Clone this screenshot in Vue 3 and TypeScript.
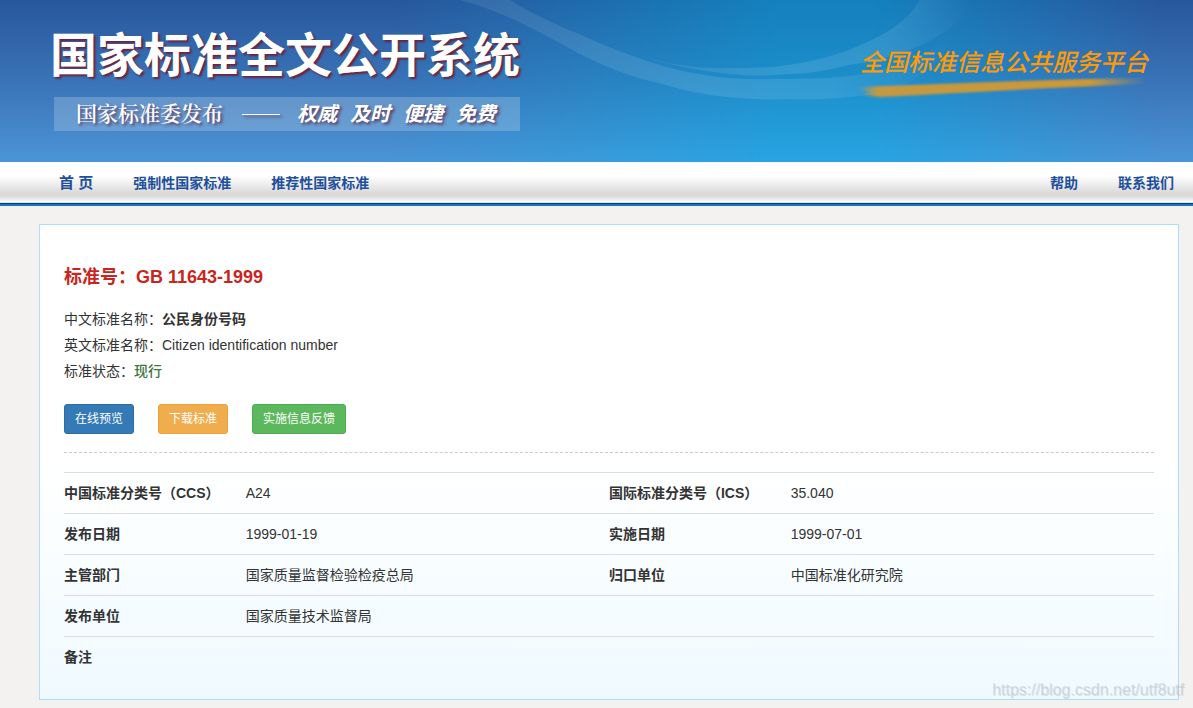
<script setup lang="ts">
interface Row {
  label: string
  value: string
  label2?: string
  value2?: string
}

const slogans: string[] = ['权威', '及时', '便捷', '免费']
const mainLinks: string[] = ['首 页', '强制性国家标准', '推荐性国家标准']
const sideLinks: string[] = ['帮助', '联系我们']
const rows: Row[] = [
  { label: '中国标准分类号（CCS）', value: 'A24', label2: '国际标准分类号（ICS）', value2: '35.040' },
  { label: '发布日期', value: '1999-01-19', label2: '实施日期', value2: '1999-07-01' },
  { label: '主管部门', value: '国家质量监督检验检疫总局', label2: '归口单位', value2: '中国标准化研究院' },
  { label: '发布单位', value: '国家质量技术监督局' },
  { label: '备注', value: '' },
]
</script>

<template>
  <div class="page">
    <header class="banner">
      <svg class="waves" viewBox="0 0 1193 162" preserveAspectRatio="none" aria-hidden="true">
        <defs>
          <linearGradient id="base" x1="0" y1="0" x2="0" y2="1">
            <stop offset="0" stop-color="#28579c" />
            <stop offset="0.5" stop-color="#3a73b7" />
            <stop offset="1" stop-color="#4b95d6" />
          </linearGradient>
          <linearGradient id="cyan" x1="0" y1="0" x2="0" y2="1">
            <stop offset="0" stop-color="#1580bd" />
            <stop offset="0.5" stop-color="#1b8fcb" />
            <stop offset="1" stop-color="#29a4e2" />
          </linearGradient>
          <linearGradient id="fade" x1="0" y1="0" x2="1" y2="0">
            <stop offset="0" stop-color="#000" />
            <stop offset="0.15" stop-color="#484848" />
            <stop offset="0.32" stop-color="#a8a8a8" />
            <stop offset="0.48" stop-color="#fff" />
            <stop offset="0.6" stop-color="#fff" />
            <stop offset="0.76" stop-color="#909090" />
            <stop offset="0.96" stop-color="#000" />
          </linearGradient>
          <linearGradient id="ribbon" x1="0" y1="0" x2="1" y2="0">
            <stop offset="0" stop-color="#fff" stop-opacity="0.08" />
            <stop offset="0.5" stop-color="#fff" stop-opacity="0.11" />
            <stop offset="0.75" stop-color="#fff" stop-opacity="0.1" />
            <stop offset="1" stop-color="#fff" stop-opacity="0" />
          </linearGradient>
          <mask id="glow">
            <rect x="392" width="801" height="162" fill="url(#fade)" />
          </mask>
        </defs>
        <rect width="1193" height="162" fill="url(#base)" />
        <rect width="1193" height="162" fill="url(#cyan)" mask="url(#glow)" />
        <path d="M460 0H510C521 7 532 13 543 18C557 25 570 31 584 36C600 44 616 50 633 56C657 65 681 72 706 75C728 79 750 80 772 79C798 79 824 79 849 76C871 73 891 67 910 60C925 54 940 46 953 37C942 58 925 77 900 87C884 93 867 96 849 97C829 99 808 100 788 99C767 100 747 99 727 97C706 95 686 91 666 85C646 80 627 75 608 67C591 60 575 52 560 43C545 35 530 27 515 20C497 12 479 5 460 0Z" fill="url(#ribbon)" />
        <path d="M640 56C670 65 700 69 731 68C751 68 770 68 788 65C810 62 830 57 849 50C864 44 878 37 890 30C902 22 914 11 920 0H972C968 11 961 20 951 27C939 37 925 44 910 50C890 57 870 62 849 65C829 70 808 74 788 74C769 76 750 76 731 74C700 71 669 65 640 56Z" fill="url(#ribbon)" />
      </svg>
      <div class="brand">
        <h1>国家标准全文公开系统</h1>
        <p class="tagline">
          <span class="issuer">国家标准委发布</span>
          <span class="dash"></span>
          <span class="slogans"><em v-for="s in slogans" :key="s">{{ s }}</em></span>
        </p>
      </div>
      <div class="platform">
        <span>全国标准信息公共服务平台</span>
        <svg class="stroke" viewBox="0 0 288 22" aria-hidden="true">
          <defs>
            <linearGradient id="brush" x1="0" y1="0" x2="1" y2="0">
              <stop offset="0" stop-color="#d79a30" stop-opacity="0.1" />
              <stop offset="0.06" stop-color="#d79a30" stop-opacity="0.9" />
              <stop offset="0.8" stop-color="#d79a30" stop-opacity="0.95" />
              <stop offset="1" stop-color="#d79a30" stop-opacity="0" />
            </linearGradient>
            <filter id="soft"><feGaussianBlur stdDeviation="0.8" /></filter>
          </defs>
          <path d="M0 9C90 6 190 1 286 0L284 6C190 9 110 15 20 19L2 17L8 14L0 12Z" fill="url(#brush)" filter="url(#soft)" />
        </svg>
      </div>
    </header>

    <nav class="menu">
      <div class="group">
        <a v-for="(l, i) in mainLinks" :key="l" href="#" :class="{ home: i === 0 }">{{ l }}</a>
      </div>
      <div class="group">
        <a v-for="l in sideLinks" :key="l" href="#">{{ l }}</a>
      </div>
    </nav>

    <main class="content">
      <section class="card">
        <h2>标准号：GB 11643-1999</h2>
        <p>中文标准名称：<b>公民身份号码</b></p>
        <p>英文标准名称：Citizen identification number</p>
        <p>标准状态：<span class="active">现行</span></p>
        <div class="actions">
          <button type="button" class="primary">在线预览</button>
          <button type="button" class="warning">下载标准</button>
          <button type="button" class="success">实施信息反馈</button>
        </div>
        <table>
          <tbody>
            <tr v-for="r in rows" :key="r.label">
              <th scope="row">{{ r.label }}</th>
              <td :colspan="r.label2 ? 1 : 3">{{ r.value }}</td>
              <template v-if="r.label2">
                <th scope="row">{{ r.label2 }}</th>
                <td>{{ r.value2 }}</td>
              </template>
            </tr>
          </tbody>
        </table>
      </section>
    </main>
    <div class="watermark">https://blog.csdn.net/utf8utf</div>
  </div>
</template>

<style>
body {
  background: #f3f2f1;
}
</style>

<style scoped>
.page {
  position: relative;
  font: 14px/20px "Liberation Sans", "Noto Sans CJK SC", sans-serif;
  color: #333;
}

.page * {
  box-sizing: border-box;
}

.banner {
  position: relative;
  display: flex;
  justify-content: space-between;
  min-height: 162px;
  padding: 28px 45px 0 50px;
  overflow: hidden;
}

.waves {
  position: absolute;
  inset: 0;
  width: 100%;
  height: 100%;
}

.brand,
.platform {
  position: relative;
}

h1 {
  margin: 0;
  font-size: 47px;
  line-height: 56px;
  font-weight: 700;
  color: #fff;
  text-shadow: 2px 2px 2px #6a2440;
  white-space: nowrap;
}

.tagline {
  display: flex;
  align-items: center;
  height: 34px;
  margin: 13px 0 0 4px;
  padding: 0 24px 0 22px;
  background: rgba(255, 255, 255, 0.2);
  color: #fff;
  text-shadow: 2px 2px 3px #5a3a60;
  white-space: nowrap;
}

.issuer {
  font-family: "Liberation Serif", "Noto Serif CJK SC", "Noto Sans CJK SC", serif;
  font-size: 21px;
  font-weight: 600;
}

.dash {
  width: 38px;
  height: 1px;
  margin: 0 17px 0 19px;
  background: #fff;
  box-shadow: 2px 2px 3px #5a3a60;
}

.slogans {
  display: flex;
  gap: 13px;
  font-size: 20px;
  font-weight: 700;
}

.platform {
  display: flex;
  flex-direction: column;
  padding-top: 20px;
  font-size: 24px;
  line-height: 30px;
  font-weight: 500;
  color: #ff9a05;
  white-space: nowrap;
}

.platform span {
  font-style: italic;
}

.stroke {
  width: 288px;
  height: 22px;
  overflow: visible;
}

.menu {
  display: flex;
  justify-content: space-between;
  height: 44px;
  padding: 0 19px 0 59px;
  background: linear-gradient(#f8fbff 0, #fff 6px, #fff 14px, #f2f2f2 20px, #dadada 31px, #dadada 34px, #f0f0f0 38px, #fff 40px, #a9c8c8 41px, #003f7c 41px, #003f7c 42px, #1874bb 42px);
}

.group {
  display: flex;
  gap: 40px;
}

.menu a {
  line-height: 42px;
  font-weight: 700;
  color: #1d4f9c;
  text-decoration: none;
}

.menu .home {
  font-size: 15px;
}

.content {
  padding: 18px 14px 8px 39px;
}

.card {
  padding: 39px 24px 21px;
  border: 1px solid #aeddfb;
  background: linear-gradient(#fff 50%, #effaff);
}

h2 {
  margin: 0 0 16px;
  font-size: 18px;
  line-height: 26px;
  color: #c7251d;
}

p {
  margin: 0;
  line-height: 26px;
}

.active {
  color: #3c763d;
  font-weight: 500;
}

.actions {
  display: flex;
  gap: 24px;
  padding: 20px 0 18px;
  border-bottom: 1px dashed #ccc;
  margin-bottom: 19px;
}

button {
  height: 30px;
  padding: 0 10px;
  border: 1px solid;
  border-radius: 3px;
  font: 12px/18px "Liberation Sans", "Noto Sans CJK SC", sans-serif;
  color: #fff;
}

.primary {
  background: #337ab7;
  border-color: #2e6da4;
}

.warning {
  background: #f0ad4e;
  border-color: #eea236;
}

.success {
  background: #5cb85c;
  border-color: #4cae4c;
}

table {
  width: 100%;
  table-layout: fixed;
  border-collapse: collapse;
}

th,
td {
  width: 33.333%;
  height: 41px;
  padding: 0;
  border-top: 1px solid #ddd;
  text-align: left;
}

th {
  width: 16.667%;
  white-space: nowrap;
}

.watermark {
  position: absolute;
  right: 9px;
  bottom: 8px;
  font-size: 16px;
  color: rgba(150, 160, 165, 0.28);
  text-shadow: 1px 1px 0 rgba(170, 175, 180, 0.35);
}
</style>
